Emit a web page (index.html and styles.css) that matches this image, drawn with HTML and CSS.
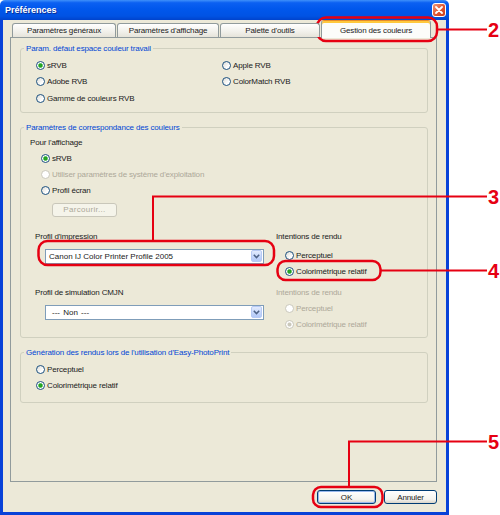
FILE: index.html
```html
<!DOCTYPE html>
<html lang="fr">
<head>
<meta charset="utf-8">
<title>Préférences</title>
<link rel="stylesheet" href="styles.css">
</head>
<body>
<div class="window">
  <div class="titlebar">
    <span class="title">Préférences</span>
    <span class="close"><svg width="8" height="8" viewBox="0 0 8 8"><path d="M1 1L7 7M7 1L1 7" stroke="#fff" stroke-width="1.8" stroke-linecap="round"/></svg></span>
  </div>
  <div class="client">
    <div class="tabs">
      <div class="tab t1">Paramètres généraux</div>
      <div class="tab t2">Paramètres d'affichage</div>
      <div class="tab t3">Palette d'outils</div>
      <div class="tab active">Gestion des couleurs</div>
    </div>
    <div class="panel">
      <div class="group g1">
        <div class="group-title">Param. défaut espace couleur travail</div>
        <div class="grid2">
          <div class="radio"><span class="dot on"></span>sRVB</div>
          <div class="radio"><span class="dot"></span>Apple RVB</div>
          <div class="radio"><span class="dot"></span>Adobe RVB</div>
          <div class="radio"><span class="dot"></span>ColorMatch RVB</div>
          <div class="radio"><span class="dot"></span>Gamme de couleurs RVB</div>
        </div>
      </div>

      <div class="group g2">
        <div class="group-title">Paramètres de correspondance des couleurs</div>
        <div class="line">Pour l'affichage</div>
        <div class="sub s-aff">
          <div class="radio"><span class="dot on"></span>sRVB</div>
          <div class="radio disabled"><span class="dot"></span>Utiliser paramètres de système d'exploitation</div>
          <div class="radio"><span class="dot"></span>Profil écran</div>
        </div>
        <div class="browse">Parcourir...</div>
        <div class="cols">
          <div class="col">
            <div class="line">Profil d'impression</div>
            <div class="select"><span class="val">Canon IJ Color Printer Profile 2005</span><span class="arrow"><svg width="7" height="5" viewBox="0 0 7 5"><path d="M0.8 0.8L3.5 3.6L6.2 0.8" fill="none" stroke="#4d6185" stroke-width="1.5"/></svg></span></div>
            <div class="line l-sim">Profil de simulation CMJN</div>
            <div class="select"><span class="val non">--- Non ---</span><span class="arrow"><svg width="7" height="5" viewBox="0 0 7 5"><path d="M0.8 0.8L3.5 3.6L6.2 0.8" fill="none" stroke="#4d6185" stroke-width="1.5"/></svg></span></div>
          </div>
          <div class="col">
            <div class="line">Intentions de rendu</div>
            <div class="sub s-int">
              <div class="radio"><span class="dot"></span>Perceptuel</div>
              <div class="radio"><span class="dot on"></span>Colorimétrique relatif</div>
            </div>
            <div class="line disabled l-int2">Intentions de rendu</div>
            <div class="sub s-int2">
              <div class="radio disabled"><span class="dot"></span>Perceptuel</div>
              <div class="radio disabled"><span class="dot on"></span>Colorimétrique relatif</div>
            </div>
          </div>
        </div>
      </div>

      <div class="group g3">
        <div class="group-title">Génération des rendus lors de l'utilisation d'Easy-PhotoPrint</div>
        <div class="sub s-gen">
          <div class="radio"><span class="dot"></span>Perceptuel</div>
          <div class="radio"><span class="dot on"></span>Colorimétrique relatif</div>
        </div>
      </div>
    </div>
    <div class="buttons">
      <div class="btn ok">OK</div>
      <div class="btn cancel">Annuler</div>
    </div>
  </div>
</div>

<svg class="callouts" width="500" height="515" viewBox="0 0 500 515">
  <g fill="none" stroke="#e60012">
    <rect x="317" y="17.5" width="120" height="23.5" rx="9" stroke-width="2.5"/>
    <path d="M437 29.5H487" stroke-width="2"/>
    <rect x="38.5" y="241" width="235.5" height="24" rx="9" stroke-width="2.5"/>
    <path d="M153 241V196.5H487" stroke-width="2"/>
    <rect x="277.5" y="261" width="103" height="19" rx="8" stroke-width="2.5"/>
    <path d="M380.5 270.5H487" stroke-width="2"/>
    <rect x="313" y="487" width="69.5" height="20" rx="8" stroke-width="2.5"/>
    <path d="M349 487V441.5H487" stroke-width="2"/>
  </g>
  <g class="digits">
    <text x="488" y="37">2</text>
    <text x="488" y="204">3</text>
    <text x="488" y="278">4</text>
    <text x="488" y="449">5</text>
  </g>
</svg>
</body>
</html>
```

FILE: styles.css
```css
* {
  box-sizing: border-box;
}

body {
  margin: 0;
  width: 500px;
  height: 515px;
  overflow: hidden;
  position: relative;
  background: #ffffff;
  font-family: "Liberation Sans", Arial, sans-serif;
  font-size: 8px;
  letter-spacing: -0.15px;
  color: #1a1a1a;
}

.window {
  width: 449px;
  height: 515px;
  display: flex;
  flex-direction: column;
}

.titlebar {
  flex: none;
  height: 20px;
  display: flex;
  align-items: center;
  justify-content: space-between;
  padding: 0 3px 0 5px;
  border-radius: 5px 5px 0 0;
  background: linear-gradient(#3f90fa 0%, #0b60f2 14%, #0057ec 45%, #0053e4 80%, #0043cc 100%);
}

.title {
  color: #ffffff;
  font-weight: bold;
  font-size: 9px;
  letter-spacing: 0;
  text-shadow: 1px 1px 0 #0a2f96;
}

.close {
  width: 14px;
  height: 14px;
  border: 1px solid #ffffff;
  border-radius: 3px;
  background: linear-gradient(135deg, #ec9a7c, #e0542f 55%, #c8401f);
  display: flex;
  align-items: center;
  justify-content: center;
}

.client {
  flex: 1;
  display: flex;
  flex-direction: column;
  background: #ece9d8;
  border: 3px solid #0842d8;
  border-top: none;
  padding: 0 9px 0 7px;
}

.tabs {
  flex: none;
  height: 17px;
  display: flex;
  align-items: flex-end;
  padding-left: 2px;
  position: relative;
  z-index: 1;
}

.tab {
  height: 14px;
  margin-right: 1px;
  border: 1px solid #919b9c;
  border-bottom: none;
  border-radius: 3px 3px 0 0;
  background: linear-gradient(#ffffff, #f1f0ea 60%, #e6e4da);
  display: flex;
  align-items: center;
  justify-content: center;
  white-space: nowrap;
}

.t1 { width: 104px; }
.t2 { width: 102px; }
.t3 { width: 100px; }

.tab.active {
  width: 110px;
  height: 18px;
  margin-bottom: -1px;
  border-top: 1px solid #e68b2c;
  box-shadow: inset 0 2px 0 #ffc83c;
  background: #fcfcfa;
  padding-top: 1px;
}

.panel {
  flex: none;
  height: 445px;
  border: 1px solid #919b9c;
  background: #ece9d8;
  padding: 10px 8px 0 9px;
}

.group {
  border: 1px solid #d0d0bf;
  border-radius: 3px;
}

.group-title {
  width: max-content;
  margin: -6px 0 0 3px;
  padding: 0 2px;
  line-height: 11px;
  background: #ece9d8;
  color: #0046d5;
}

.radio {
  height: 16px;
  display: flex;
  align-items: center;
  gap: 2px;
  white-space: nowrap;
}

.dot {
  flex: none;
  width: 9px;
  height: 9px;
  border-radius: 50%;
  border: 1px solid #1c5180;
  background: linear-gradient(135deg, #dcdcd6, #ffffff 70%);
}

.dot.on {
  background: radial-gradient(circle, #2aa62a 0, #21a121 1.5px, #7fcf7f 2.2px, #ffffff 2.8px);
}

.disabled {
  color: #aca899;
}

.disabled .dot {
  border-color: #cac8bb;
  background: #ffffff;
}

.disabled .dot.on {
  background: radial-gradient(circle, #cac8bb 0, #cac8bb 1.5px, #ffffff 2.5px);
}

.line {
  height: 16px;
  display: flex;
  align-items: center;
  white-space: nowrap;
}

/* group 1 */
.grid2 {
  display: grid;
  grid-template-columns: 186px auto;
  grid-auto-rows: 16.5px;
  padding: 3px 0 5px 15px;
}

/* group 2 */
.g2 {
  margin-top: 14px;
  padding: 0 0 4px 9px;
}

.g2 > .group-title {
  margin-left: -6px;
  margin-bottom: 2px;
}

.s-aff {
  padding-left: 11px;
}

.browse {
  width: 65px;
  height: 14px;
  margin: 4px 0 0 22px;
  border: 1px solid #c9c7ba;
  border-radius: 3px;
  background: #f5f4ea;
  color: #aca899;
  letter-spacing: 0.3px;
  display: flex;
  align-items: center;
  justify-content: center;
}

.cols {
  display: grid;
  grid-template-columns: 241px 1fr;
  margin: 12px 0 0 5px;
}

.select {
  width: 219px;
  height: 15px;
  margin: 4px 0 0 10px;
  border: 1px solid #7f9db9;
  background: #ffffff;
  display: flex;
  align-items: center;
  justify-content: space-between;
  padding-left: 3px;
}

.val {
  letter-spacing: 0;
  white-space: nowrap;
}

.val.non {
  padding-left: 3px;
  word-spacing: 1px;
}

.arrow {
  width: 11px;
  height: 12px;
  margin-right: 1px;
  border: 1px solid #b7caf5;
  border-radius: 2px;
  background: linear-gradient(#e3ebfd, #c3d5fb 60%, #b4c9f7);
  display: flex;
  align-items: center;
  justify-content: center;
}

.l-sim {
  margin-top: 21px;
}

.s-int {
  padding-left: 9px;
  margin-top: 3px;
}

.l-int2 {
  margin-top: 5px;
}

.s-int2 {
  padding-left: 9px;
}

/* group 3 */
.g3 {
  margin-top: 14px;
  padding-bottom: 8px;
}

.s-gen {
  padding-left: 15px;
  margin-top: 4px;
}

/* bottom buttons */
.buttons {
  flex: none;
  height: 14px;
  margin-top: 8px;
  display: flex;
  justify-content: flex-end;
  gap: 8px;
}

.btn {
  height: 14px;
  border: 1px solid #003c74;
  border-radius: 3px;
  background: linear-gradient(#ffffff, #f4f3ee 70%, #d9d4c8);
  display: flex;
  align-items: center;
  justify-content: center;
}

.btn.ok {
  width: 59px;
  box-shadow: inset 0 0 0 1px #98b8ee;
}

.btn.cancel {
  width: 53px;
}

/* callouts overlay */
.callouts {
  position: absolute;
  left: 0;
  top: 0;
  pointer-events: none;
}

.digits {
  fill: #e60012;
  font-family: "Liberation Sans", Arial, sans-serif;
  font-weight: bold;
  font-size: 20px;
  letter-spacing: 0;
}
```
